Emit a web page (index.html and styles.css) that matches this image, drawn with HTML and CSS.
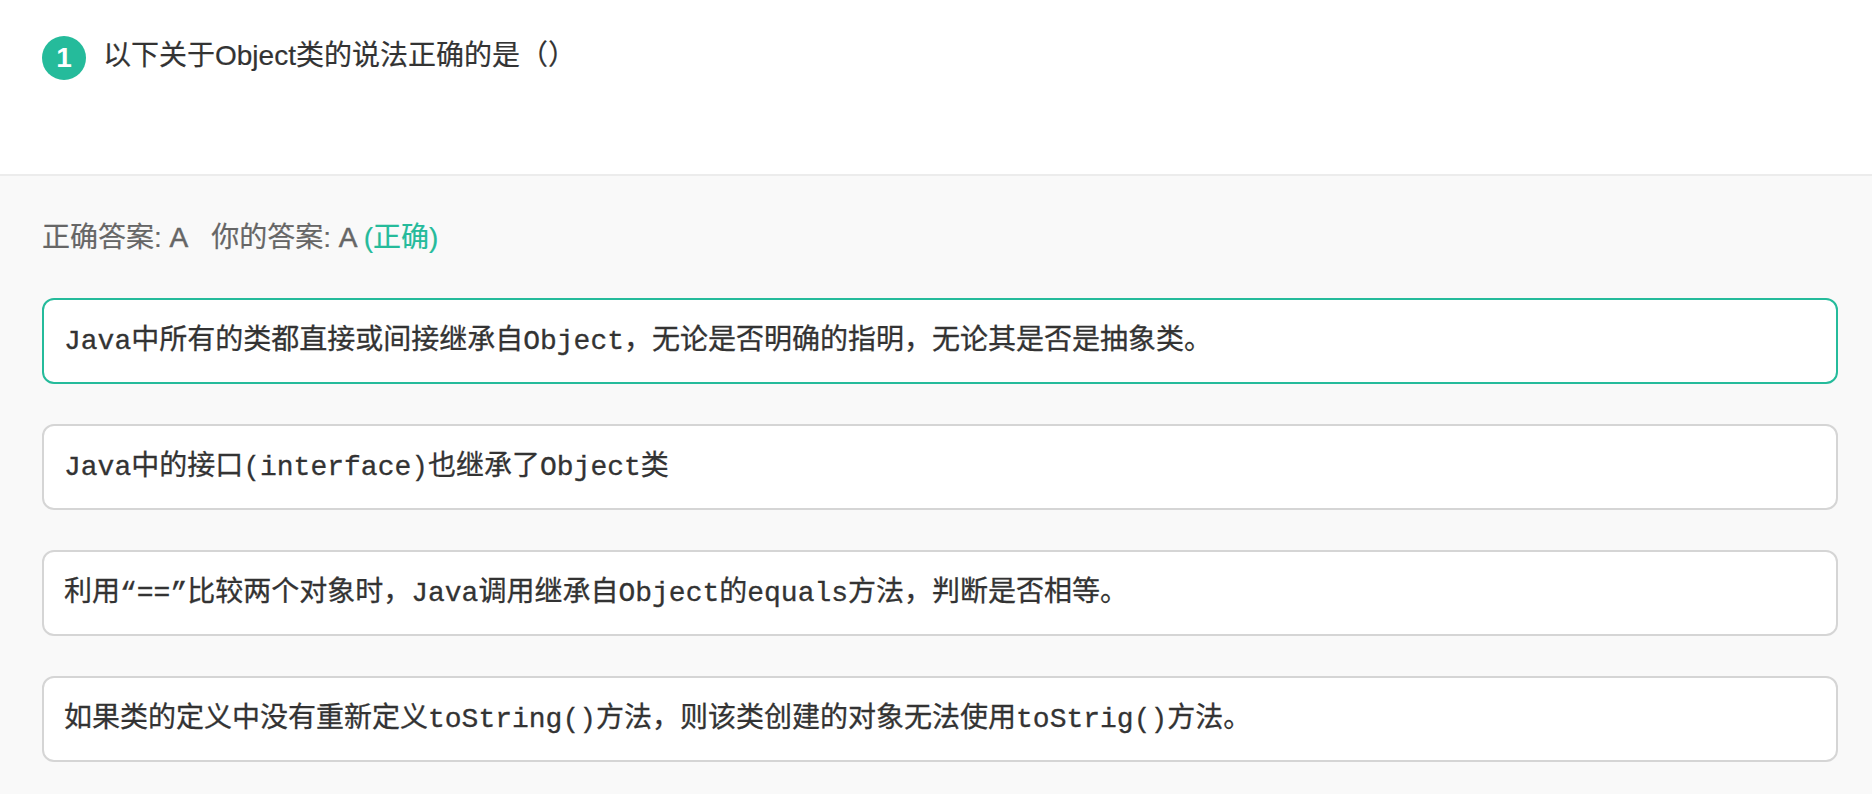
FILE: index.html
```html
<!DOCTYPE html>
<html lang="zh-CN">
<head>
<meta charset="utf-8">
<title>题目解析</title>
<link rel="stylesheet" href="styles.css">
</head>
<body>
<header class="question">
  <span class="num">1</span>
  <p class="stem">以下关于Object类的说法正确的是（）</p>
</header>
<section class="result">
  <p class="answer"><span class="pair">正确答案: <b>A</b></span><span class="pair">你的答案: <b>A</b></span> <span class="ok">(正确)</span></p>
  <ul class="options">
    <li class="option correct">Java中所有的类都直接或间接继承自Object，无论是否明确的指明，无论其是否是抽象类。</li>
    <li class="option">Java中的接口(interface)也继承了Object类</li>
    <li class="option">利用“==”比较两个对象时，Java调用继承自Object的equals方法，判断是否相等。</li>
    <li class="option">如果类的定义中没有重新定义toString()方法，则该类创建的对象无法使用toStrig()方法。</li>
  </ul>
</section>
</body>
</html>
```
FILE: styles.css
```css
* { box-sizing: border-box; }
html, body { margin: 0; padding: 0; }
body {
  background: #f9f9f9;
  font-family: "Liberation Sans", "Noto Sans CJK SC", sans-serif;
  color: #333;
  min-height: 794px;
}
.question {
  display: flex;
  align-items: flex-start;
  height: 176px;
  padding: 36px 42px 0;
  background: #fff;
  border-bottom: 2px solid #ececec;
}
.num {
  flex: none;
  width: 44px;
  height: 44px;
  border-radius: 50%;
  background: #25bb9b;
  color: #fff;
  font-size: 28px;
  font-weight: 700;
  line-height: 44px;
  text-align: center;
}
.stem {
  margin: 0 0 0 17px;
  font-size: 28px;
  line-height: 40px;
  -webkit-text-stroke: 0.2px #333;
}
.result { padding: 46px 34px 0 42px; }
.answer {
  margin: 0;
  font-size: 28px;
  line-height: 32px;
  color: #666;
  -webkit-text-stroke: 0.2px currentColor;
}
.answer b { font-weight: 400; -webkit-text-stroke: 0.5px currentColor; }
.pair { margin-right: 23px; }
.pair + .pair { margin-right: 0; }
.ok { color: #25bb9b; }
.options {
  list-style: none;
  margin: 44px 0 0;
  padding: 0;
  display: flex;
  flex-direction: column;
  gap: 40px;
}
.option {
  height: 86px;
  padding: 1px 20px 0;
  background: #fff;
  border: 2px solid #d5d5d5;
  border-radius: 12px;
  font-family: "Liberation Mono", "Noto Sans CJK SC", monospace;
  font-size: 28px;
  line-height: 82px;
  white-space: nowrap;
  -webkit-text-stroke: 0.3px #333;
}
.option.correct { border-color: #25bb9b; }
```
